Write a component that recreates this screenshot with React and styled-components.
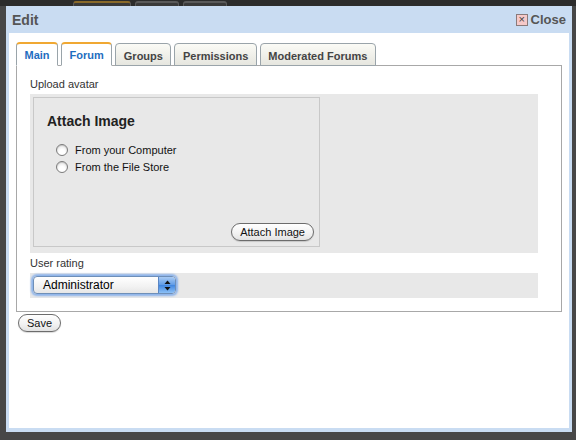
import React from 'react';
import styled, { createGlobalStyle } from 'styled-components';

const Global = createGlobalStyle`
	html, body {
		margin: 0;
		padding: 0;
	}
	body {
		background: #474747;
		font-family: 'Liberation Sans', Arial, sans-serif;
		width: 576px;
		height: 440px;
		overflow: hidden;
	}
`;

const tabs = [
	{ label: 'Main', active: true },
	{ label: 'Forum', active: true },
	{ label: 'Groups' },
	{ label: 'Permissions' },
	{ label: 'Moderated Forums' },
];

const App = () => {
	return (
		<>
			<Global />
			<Backdrop>
				<TopStrip>
					<BackTab $accent />
					<BackTab />
					<BackTab />
				</TopStrip>
			</Backdrop>

			<Dialog>
				<TitleBar>
					<Title>Edit</Title>
					<CloseLink>
						<CloseBox>×</CloseBox>
						Close
					</CloseLink>
				</TitleBar>

				<Body>
					<TabRow>
						{tabs.map((t) => (
							<Tab key={t.label} $active={t.active}>
								{t.label}
							</Tab>
						))}
					</TabRow>

					<Panel>
						<Label>Upload avatar</Label>
						<GreyArea>
							<AttachBox>
								<BoxTitle>Attach Image</BoxTitle>
								<RadioList>
									<RadioRow>
										<Radio />
										From your Computer
									</RadioRow>
									<RadioRow>
										<Radio />
										From the File Store
									</RadioRow>
								</RadioList>
								<AttachFooter>
									<PillButton>Attach Image</PillButton>
								</AttachFooter>
							</AttachBox>
						</GreyArea>

						<Label $top={3}>User rating</Label>
						<SelectRow>
							<Select>
								<SelectText>Administrator</SelectText>
								<SelectArrows>
									<svg width="7" height="11" viewBox="0 0 7 11">
										<path d="M3.5 0.5 L6.5 4 L0.5 4 Z" fill="#111" />
										<path d="M3.5 10.5 L6.5 7 L0.5 7 Z" fill="#111" />
									</svg>
								</SelectArrows>
							</Select>
						</SelectRow>
					</Panel>

					<SaveWrap>
						<PillButton>Save</PillButton>
					</SaveWrap>
				</Body>
			</Dialog>
		</>
	);
};

const Backdrop = styled.div`
	width: 576px;
	height: 440px;
	background: #474747;
`;

const TopStrip = styled.div`
	height: 6px;
	background: #2c2c2c;
	display: flex;
	gap: 4px;
	padding-left: 73px;
`;

const BackTab = styled.div`
	width: ${(p) => (p.$accent ? '58px' : '44px')};
	height: 6px;
	background: #3a3a3a;
	border: 1px solid #5a5a5a;
	border-top: 2px solid ${(p) => (p.$accent ? '#8a6a2a' : '#5a5a5a')};
	border-bottom: none;
	border-radius: 3px 3px 0 0;
	box-sizing: border-box;
	margin-top: 1px;
`;

const Dialog = styled.div`
	position: absolute;
	left: 6px;
	top: 6px;
	width: 566px;
	height: 426px;
	box-sizing: border-box;
	background: #c9dcf2;
	padding: 0 3px 4px 3px;
	display: flex;
	flex-direction: column;
`;

const TitleBar = styled.div`
	height: 27px;
	display: flex;
	align-items: center;
	justify-content: space-between;
	padding: 0 3px 0 3px;
`;

const Title = styled.div`
	font-size: 14px;
	font-weight: bold;
	color: #555;
`;

const CloseLink = styled.div`
	display: flex;
	align-items: center;
	gap: 3px;
	font-size: 13px;
	font-weight: bold;
	color: #555;
`;

const CloseBox = styled.span`
	width: 12px;
	height: 12px;
	box-sizing: border-box;
	border: 1px solid #8a7a7a;
	background: #f6c9c9;
	color: #444;
	font-size: 11px;
	font-weight: normal;
	line-height: 9px;
	text-align: center;
`;

const Body = styled.div`
	flex: 1;
	background: #fff;
	padding: 9px 7px 0 7px;
`;

const TabRow = styled.div`
	display: flex;
	gap: 3px;
	align-items: flex-end;
	position: relative;
	z-index: 1;
	margin-bottom: -1px;
`;

const Tab = styled.div`
	height: 23px;
	box-sizing: border-box;
	padding: 0 7.5px;
	display: flex;
	align-items: center;
	font-size: 11px;
	font-weight: bold;
	border: 1px solid #9aa4aa;
	border-radius: 4px 4px 0 0;
	${(p) =>
		p.$active
			? `
		height: 24px;
		color: #1f6ec0;
		background: #fff;
		border-top: 2px solid #f0a832;
		border-bottom-color: #fff;
		padding-top: 1px;
	`
			: `
		color: #444;
		background: linear-gradient(#fbfbf6, #e6e6df);
		padding-top: 2px;
	`}
`;

const Panel = styled.div`
	width: 546px;
	box-sizing: border-box;
	border: 1px solid #a8a8a8;
	padding: 11px 0 13px 13px;
`;

const Label = styled.div`
	font-size: 11px;
	color: #333;
	margin-top: ${(p) => p.$top || 0}px;
	height: 14px;
	line-height: 14px;
	margin-bottom: 3px;
`;

const GreyArea = styled.div`
	width: 508px;
	height: 159px;
	box-sizing: border-box;
	background: #e8e8e8;
	padding: 3px 0 6px 3px;
`;

const AttachBox = styled.div`
	width: 287px;
	height: 150px;
	box-sizing: border-box;
	border: 1px solid #c8c8c8;
	padding: 15px 5px 5px 13px;
	display: flex;
	flex-direction: column;
`;

const BoxTitle = styled.div`
	font-size: 14px;
	font-weight: bold;
	color: #222;
	line-height: 17px;
`;

const RadioList = styled.div`
	display: flex;
	flex-direction: column;
	gap: 3px;
	margin-top: 13px;
	padding-left: 9px;
`;

const RadioRow = styled.div`
	display: flex;
	align-items: center;
	gap: 7px;
	font-size: 11px;
	color: #111;
	height: 14px;
`;

const Radio = styled.span`
	width: 12px;
	height: 12px;
	box-sizing: border-box;
	border-radius: 50%;
	border: 1px solid #7c7c7c;
	background: radial-gradient(circle at 50% 70%, #ffffff 30%, #dcdcdc 100%);
	box-shadow: inset 0 1px 1px rgba(0, 0, 0, 0.15);
`;

const AttachFooter = styled.div`
	margin-top: auto;
	display: flex;
	justify-content: flex-end;
`;

const PillButton = styled.div`
	height: 18px;
	box-sizing: border-box;
	padding: 0 8px;
	border: 1px solid #6c6c6c;
	border-radius: 9px;
	background: linear-gradient(#ffffff, #f1f1f1 60%, #e2e2e2);
	box-shadow: 0 1px 1px rgba(0, 0, 0, 0.15);
	font-size: 11px;
	color: #111;
	display: flex;
	align-items: center;
	width: fit-content;
`;

const SelectRow = styled.div`
	width: 508px;
	height: 25px;
	box-sizing: border-box;
	background: #e8e8e8;
	padding: 3px 0 0 3px;
	margin-top: 0;
`;

const Select = styled.div`
	width: 143px;
	height: 18px;
	box-sizing: border-box;
	border: 1px solid #6e8fb8;
	border-radius: 4px;
	background: linear-gradient(#ffffff, #f2f2f2 60%, #e6e6e6);
	box-shadow: 0 0 2px 2px #8eb4ea;
	display: flex;
	align-items: stretch;
	overflow: hidden;
`;

const SelectText = styled.div`
	flex: 1;
	font-size: 12px;
	color: #000;
	padding-left: 9px;
	display: flex;
	align-items: center;
`;

const SelectArrows = styled.div`
	width: 16px;
	border-left: 1px solid #5a86c4;
	background: linear-gradient(#a9cbf4, #5f9be6 50%, #3f85e0 51%, #8cc0f6);
	display: flex;
	align-items: center;
	justify-content: center;
`;

const SaveWrap = styled.div`
	padding-top: 2px;
	padding-left: 2px;
`;

export default App;
